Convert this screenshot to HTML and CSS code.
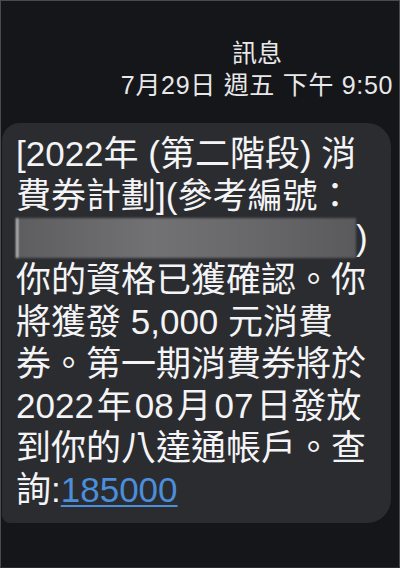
FILE: index.html
```html
<!DOCTYPE html>
<html lang="zh-Hant">
<head>
    <meta charset="UTF-8">
    <meta name="viewport" content="width=device-width, initial-scale=1.0">
    <title>訊息</title>
    <link rel="stylesheet" href="styles.css">
</head>
<body>
    <div class="screen">
        <div class="header">
            <div class="title">訊息</div>
            <div class="stamp">7月29日 週五 下午 9:50</div>
        </div>
        <div class="bubble">
            <p class="message">[2022年 (第二階段) 消<br>費券計劃](參考編號：<br><span class="redacted"></span>)<br>你的資格已獲確認。你<br>將獲發 5,000 元消費<br>券。第一期消費券將於<br>2022&#8202;年&#8202;08&#8202;月&#8202;07&#8202;日發放<br>到你的八達通帳戶。查<br>詢:<a href="#">185000</a></p>
        </div>
    </div>
</body>
</html>
```

FILE: styles.css
```css
body, html {
    margin: 0;
    padding: 0;
    background-color: #151619;
    font-family: "Liberation Sans", "Noto Sans CJK TC", sans-serif;
}

.screen {
    box-sizing: border-box;
    width: 400px;
    height: 568px;
    border: 1px solid #4a4b4e;
    border-bottom-color: #2a2b2e;
    overflow: hidden;
}

.header {
    display: flex;
    flex-direction: column;
    align-items: center;
    padding: 36px 0 0 114px;
    color: #e8e8ea;
    font-size: 25px;
    line-height: 32px;
}

.stamp {
    letter-spacing: 0.7px;
}

.bubble {
    margin: 22px 8px 0 1px;
    padding: 10px 0 12px 14px;
    background-color: #2b2c30;
    border-radius: 18px 24px 24px 8px;
}

.message {
    margin: 0;
    color: #f4f4f6;
    font-size: 35px;
    line-height: 42px;
    white-space: nowrap;
}

.redacted {
    display: inline-block;
    width: 338px;
    height: 40px;
    vertical-align: -8px;
    border-left: 2px solid #d8d8d8;
    background: linear-gradient(90deg, #5e5e60, #727274 40%, #68686a 70%, #5a5a5c);
    filter: blur(1px);
}

.message a {
    color: #4b8fdc;
    text-decoration: underline;
    text-decoration-thickness: 2px;
    text-underline-offset: 3px;
}
```
